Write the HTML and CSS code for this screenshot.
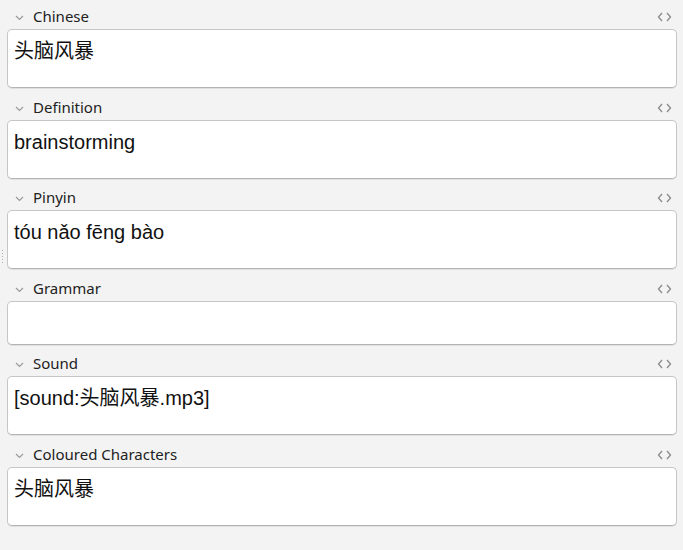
FILE: index.html
```html
<!DOCTYPE html>
<html>
<head>
<meta charset="utf-8">
<link rel="stylesheet" href="styles.css">
</head>
<body>
<div class="handle"><span></span><span></span><span></span><span></span><span></span></div>
<div class="fields">
  <div class="field">
    <div class="label-row">
      <svg class="chev" width="9" height="6" viewBox="0 0 9 6"><polyline points="1,1 4.5,4.5 8,1"/></svg>
      <span class="label">Chinese</span>
      <svg class="code" width="15" height="10" viewBox="0 0 15 10"><polyline points="5,1 1.5,5 5,9"/><polyline points="10,1 13.5,5 10,9"/></svg>
    </div>
    <div class="box">头脑风暴</div>
  </div>
  <div class="field">
    <div class="label-row">
      <svg class="chev" width="9" height="6" viewBox="0 0 9 6"><polyline points="1,1 4.5,4.5 8,1"/></svg>
      <span class="label">Definition</span>
      <svg class="code" width="15" height="10" viewBox="0 0 15 10"><polyline points="5,1 1.5,5 5,9"/><polyline points="10,1 13.5,5 10,9"/></svg>
    </div>
    <div class="box">brainstorming</div>
  </div>
  <div class="field">
    <div class="label-row">
      <svg class="chev" width="9" height="6" viewBox="0 0 9 6"><polyline points="1,1 4.5,4.5 8,1"/></svg>
      <span class="label">Pinyin</span>
      <svg class="code" width="15" height="10" viewBox="0 0 15 10"><polyline points="5,1 1.5,5 5,9"/><polyline points="10,1 13.5,5 10,9"/></svg>
    </div>
    <div class="box">tóu nǎo fēng bào</div>
  </div>
  <div class="field">
    <div class="label-row">
      <svg class="chev" width="9" height="6" viewBox="0 0 9 6"><polyline points="1,1 4.5,4.5 8,1"/></svg>
      <span class="label">Grammar</span>
      <svg class="code" width="15" height="10" viewBox="0 0 15 10"><polyline points="5,1 1.5,5 5,9"/><polyline points="10,1 13.5,5 10,9"/></svg>
    </div>
    <div class="box empty"></div>
  </div>
  <div class="field">
    <div class="label-row">
      <svg class="chev" width="9" height="6" viewBox="0 0 9 6"><polyline points="1,1 4.5,4.5 8,1"/></svg>
      <span class="label">Sound</span>
      <svg class="code" width="15" height="10" viewBox="0 0 15 10"><polyline points="5,1 1.5,5 5,9"/><polyline points="10,1 13.5,5 10,9"/></svg>
    </div>
    <div class="box">[sound:头脑风暴.mp3]</div>
  </div>
  <div class="field">
    <div class="label-row">
      <svg class="chev" width="9" height="6" viewBox="0 0 9 6"><polyline points="1,1 4.5,4.5 8,1"/></svg>
      <span class="label">Coloured Characters</span>
      <svg class="code" width="15" height="10" viewBox="0 0 15 10"><polyline points="5,1 1.5,5 5,9"/><polyline points="10,1 13.5,5 10,9"/></svg>
    </div>
    <div class="box">头脑风暴</div>
  </div>
</div>
</body>
</html>
```
FILE: styles.css
```css
html, body {
  margin: 0;
  padding: 0;
  background: #f3f3f3;
  width: 683px;
  height: 550px;
  overflow: hidden;
}
.fields {
  display: flex;
  flex-direction: column;
  gap: 7.6px;
  padding: 5px 6px 0 7px;
}
.field {
  display: flex;
  flex-direction: column;
}
.label-row {
  height: 24px;
  display: flex;
  align-items: center;
}
.chev {
  margin-left: 8px;
  margin-right: 9px;
  margin-top: 2px;
}
.chev polyline {
  fill: none;
  stroke: #9a9a9a;
  stroke-width: 1.2;
}
.label {
  font-family: "Noto Sans", sans-serif;
  font-size: 15px;
  color: #222;
  flex: 1;
  margin-top: -2px;
}
.code {
  margin-right: 5px;
}
.code polyline {
  fill: none;
  stroke: #8a8a8a;
  stroke-width: 1.3;
}
.box {
  box-sizing: border-box;
  height: 59px;
  background: #fff;
  border: 1px solid #c6c6c6;
  border-bottom-color: #b4b4b4;
  border-radius: 5px;
  box-shadow: 0 1px 0 rgba(0,0,0,0.08);
  padding: 9px 6px;
  font-family: "Liberation Sans", "Noto Sans CJK SC", sans-serif;
  font-size: 20px;
  line-height: 24px;
  color: #111;
}
.box.empty {
  height: 44px;
}
.handle {
  position: absolute;
  left: 2px;
  top: 250px;
  display: flex;
  flex-direction: column;
  gap: 2px;
}
.handle span {
  width: 1px;
  height: 1px;
  background: #b0b0b0;
}
```
